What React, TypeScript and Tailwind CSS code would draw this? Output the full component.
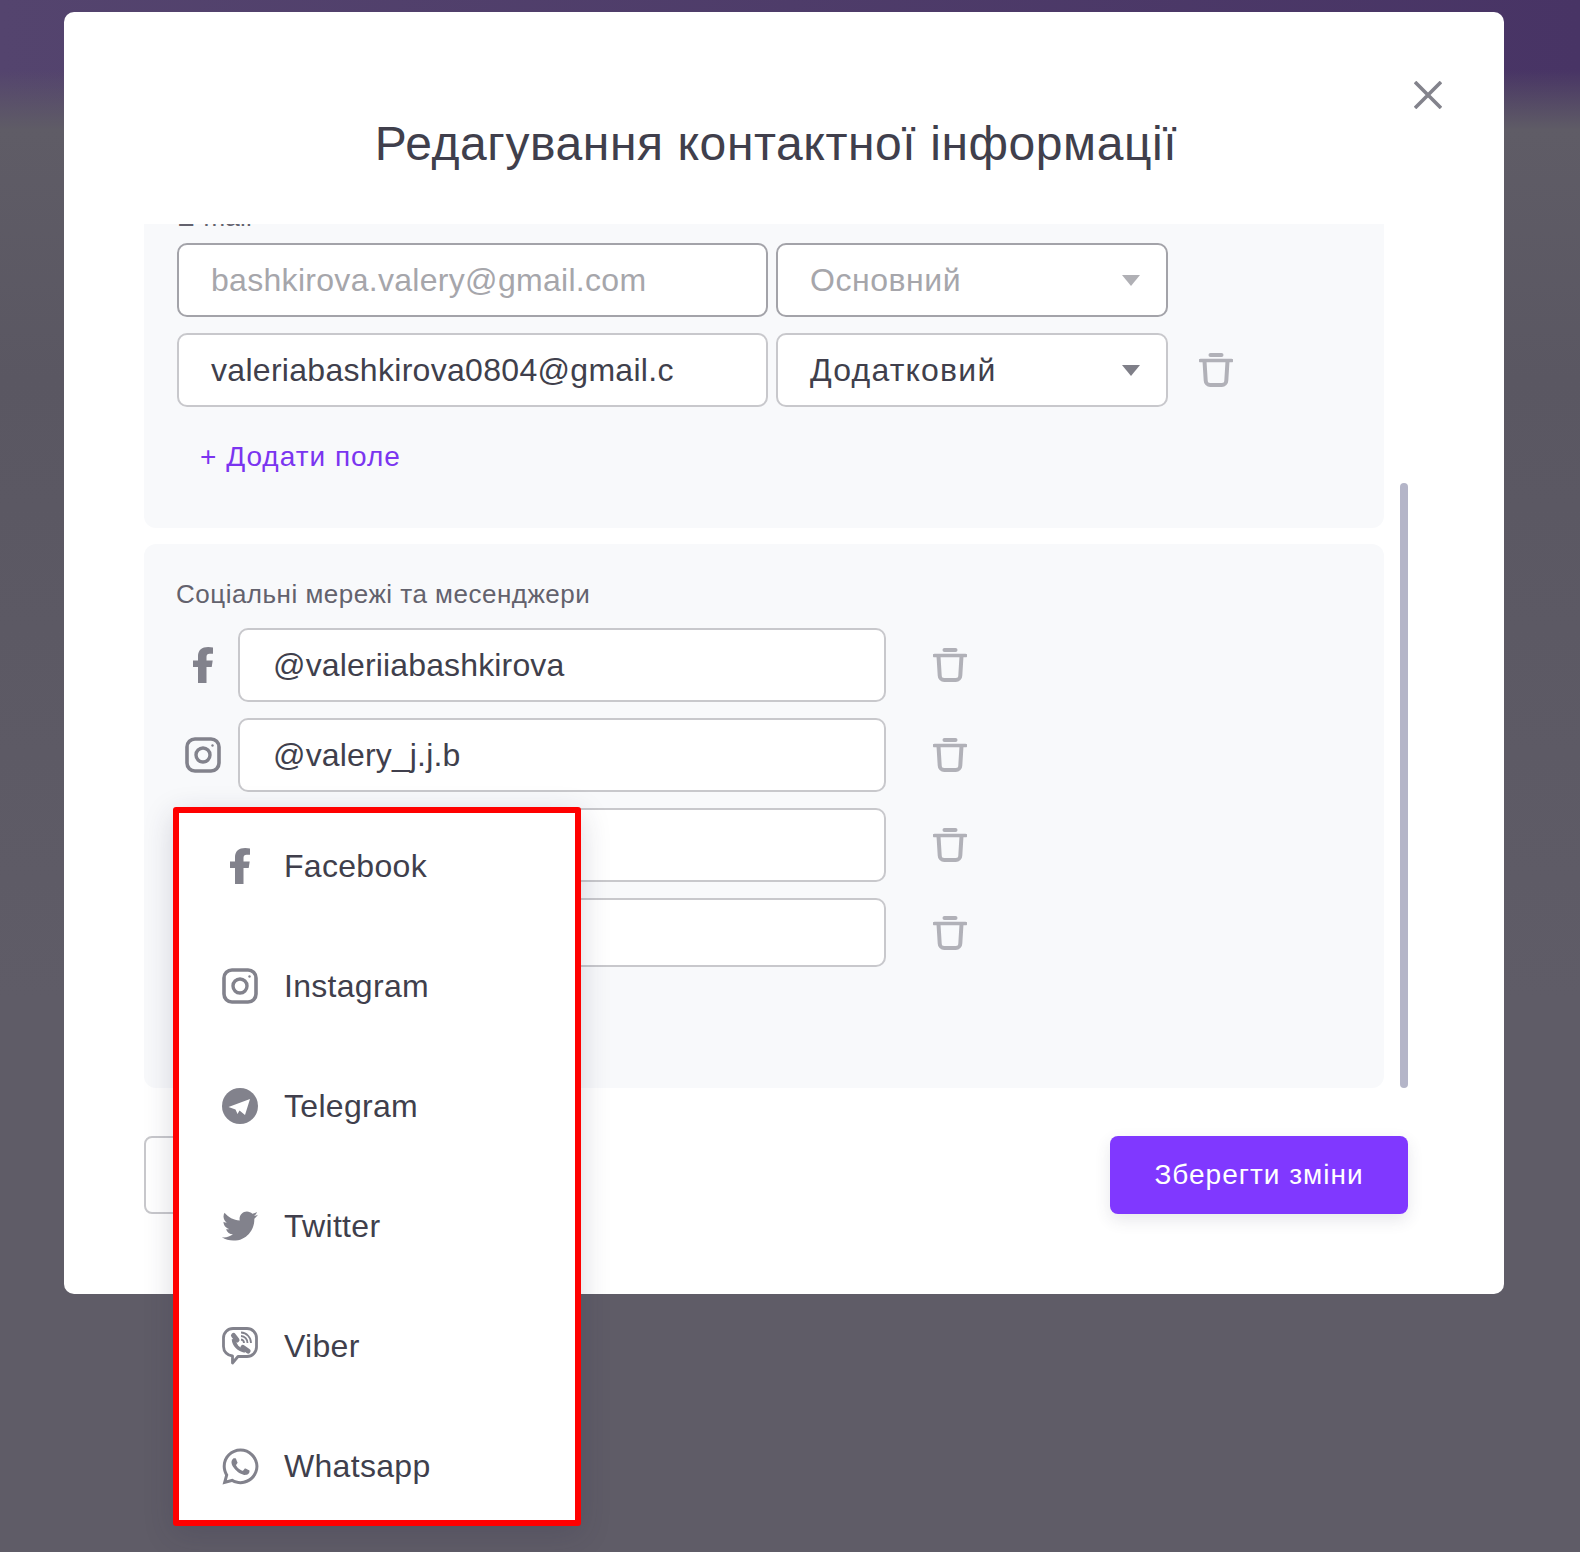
import React from 'react';
import { FaTwitter, FaWhatsapp } from 'react-icons/fa';

const font = { fontFamily: '"Liberation Sans", Arial, sans-serif' };

const FacebookIcon = () => (
  <svg viewBox="0 0 20 36" className="w-5 h-9">
    <path
      d="M13.500 36V20h5.200l1-6.500h-6.200V9.800c0-2 1-3.100 3-3.100H20V.5C18.600.2 17 0 15.200 0 9 0 5 3.200 5 9v4.500H0V20h5v16z"
      fill="currentColor"
    />
  </svg>
);

const InstagramIcon = () => (
  <svg viewBox="0 0 36 36" className="w-9 h-9" fill="none" stroke="currentColor">
    <rect x="2" y="2" width="32" height="32" rx="8" strokeWidth="3.600" />
    <circle cx="18" cy="18" r="7" strokeWidth="3.400" />
    <circle cx="27.500" cy="8.500" r="1.200" fill="currentColor" stroke="none" />
  </svg>
);

const TelegramIcon = () => (
  <svg viewBox="0 0 36 36" className="w-9 h-9">
    <circle cx="18" cy="18" r="18" fill="currentColor" />
    <path d="M6.500 19L28 11l-5 16-5.500-4.500-2 3.500-2-4.500z" fill="#fff" />
  </svg>
);

const ViberIcon = () => (
  <svg viewBox="0 0 36 38" className="w-9 h-[38px]" fill="none" stroke="currentColor">
    <path
      d="M11 1.500h14a9.500 9.500 0 0 1 9.500 9.500v9a9.500 9.500 0 0 1-9.500 9.500h-9l-5.500 6.500v-7a9.500 9.500 0 0 1-9-9.500V11A9.500 9.500 0 0 1 11 1.500z"
      strokeWidth="2.800"
      strokeLinejoin="round"
    />
    <path d="M11.500 12c.5 6 5 11 11.500 12" strokeWidth="3.600" />
    <path d="M11.500 8.500l3.500 4.500M21 20.500l5 3.500" strokeWidth="5" strokeLinecap="round" />
    <path d="M19 5.500a10.500 10.500 0 0 1 10 10.500M19 9a7 7 0 0 1 6.500 7M19 12.500a3.500 3.500 0 0 1 3 3.500" strokeWidth="1.800" />
  </svg>
);

const TrashIcon = () => (
  <svg viewBox="0 0 34 34" className="w-[34px] h-[34px] shrink-0 text-[#b1b1b8]" fill="none" stroke="currentColor">
    <path d="M11.500 2h11" strokeWidth="4" strokeLinecap="round" />
    <path d="M1.500 7.500h31" strokeWidth="3.600" strokeLinecap="round" />
    <path d="M5.500 8l1.200 19.500a4.500 4.500 0 0 0 4.500 4.500h11.600a4.500 4.500 0 0 0 4.500-4.500L28.500 8" strokeWidth="4" />
  </svg>
);

const Caret = ({ dim }: { dim?: boolean }) => (
  <svg viewBox="0 0 18 11" className={`w-[18px] h-[11px] ${dim ? 'text-[#b0b0b5]' : 'text-[#7f7f88]'}`}>
    <path d="M0 0h18L9 11z" fill="currentColor" />
  </svg>
);

const socialRows = [
  { icon: <FacebookIcon />, value: '@valeriiabashkirova', height: 'h-[74px]' },
  { icon: <InstagramIcon />, value: '@valery_j.j.b', height: 'h-[74px]' },
  { icon: null, value: '', height: 'h-[74px]' },
  { icon: null, value: '', height: 'h-[69px]' },
];

const menuItems = [
  { label: 'Facebook', icon: <FacebookIcon /> },
  { label: 'Instagram', icon: <InstagramIcon /> },
  { label: 'Telegram', icon: <TelegramIcon /> },
  { label: 'Twitter', icon: <FaTwitter className="w-9 h-9 shrink-0" /> },
  { label: 'Viber', icon: <ViberIcon /> },
  { label: 'Whatsapp', icon: <FaWhatsapp className="w-[41px] h-[41px] shrink-0" /> },
];

export default function App() {
  return (
    <div
      style={font}
      className="relative h-[1552px] w-full overflow-hidden pt-3 pl-16 bg-[linear-gradient(180deg,transparent_70px,#5f5c66_130px,#5a5762_380px,#5f5c67_1000px),linear-gradient(90deg,#54446e,#483465)]"
    >
      <div className="relative w-[1440px] h-[1282px] rounded-[10px] bg-white pl-20 pr-24">
        <button className="absolute left-[1350px] top-[69px] text-[#83838c]">
          <svg viewBox="0 0 28 28" className="w-7 h-7" stroke="currentColor" strokeWidth="3.600" fill="none">
            <path d="M1 1l26 26M27 1L1 27" />
          </svg>
        </button>

        <div className="h-[212px] pt-[92px]">
          <h1 className="h-20 leading-[80px] text-center text-[48px] font-normal tracking-[0.58px] text-[#403f4c]">
            Редагування контактної інформації
          </h1>
        </div>

        <div className="relative h-[864px] overflow-hidden">
          <div className="-mt-[53px] w-[1240px]">
            <div className="h-[357px] rounded-[12px] bg-[#f8f9fb] pt-[31px] pl-[33px]">
              <div className="h-[30px] leading-[30px] text-[26px] tracking-[0.2px] text-[#63626d]">E-mail</div>
              <div className="mt-[11px] flex gap-2">
                <div className="w-[591px] h-[74px] rounded-[10px] border-2 border-[#a3a3a9] bg-white pl-8 leading-[70px] text-[32px] tracking-[0.3px] text-[#a6a6ab]">
                  bashkirova.valery@gmail.com
                </div>
                <div className="w-[392px] h-[74px] rounded-[10px] border-2 border-[#a3a3a9] bg-white pl-[32px] pr-[26px] flex items-center justify-between text-[32px] tracking-[0.55px] text-[#a6a6ab]">
                  Основний
                  <Caret dim />
                </div>
              </div>
              <div className="mt-4 flex items-center gap-2">
                <div className="w-[591px] h-[74px] rounded-[10px] border-2 border-[#c8c8cc] bg-white pl-8 leading-[70px] text-[32px] tracking-[0.3px] text-[#403f4c] overflow-hidden whitespace-nowrap">
                  valeriabashkirova0804@gmail.c
                </div>
                <div className="w-[392px] h-[74px] rounded-[10px] border-2 border-[#c8c8cc] bg-white pl-[32px] pr-[26px] flex items-center justify-between text-[32px] tracking-[1.2px] text-[#403f4c]">
                  Додатковий
                  <Caret />
                </div>
                <div className="ml-[23px]">
                  <TrashIcon />
                </div>
              </div>
              <div className="mt-[32px] pl-[23px] h-9 leading-9 text-[28px] tracking-[1px] text-[#7b35f0]">
                + Додати поле
              </div>
            </div>

            <div className="mt-4 h-[544px] rounded-[12px] bg-[#f8f9fb] pt-[35px] pl-[33px]">
              <div className="h-[30px] leading-[30px] text-[26px] tracking-[0.5px] text-[#63626d] -ml-px">
                Соціальні мережі та месенджери
              </div>
              <div className="mt-[19px] flex flex-col gap-4">
                {socialRows.map((row, index) => (
                  <div key={index} className="flex items-center">
                    <div className="w-[52px] flex justify-center text-[#82828c]">{row.icon}</div>
                    <div className={`ml-[9px] w-[648px] ${row.height} rounded-[10px] border-2 border-[#c8c8cc] bg-white pl-[33px] flex items-center text-[32px] tracking-[0.15px] text-[#403f4c]`}>
                      {row.value}
                    </div>
                    <div className="ml-[47px]">
                      <TrashIcon />
                    </div>
                  </div>
                ))}
              </div>
            </div>
          </div>
          <div className="absolute right-0 top-[259px] w-2 h-[605px] rounded-full bg-[#b4b5c8]" />
        </div>

        <div className="mt-12 flex justify-between">
          <div className="w-[300px] h-[78px] rounded-lg border-2 border-[#c8c8cc] bg-white" />
          <button className="w-[298px] h-[78px] rounded-lg bg-[#8038ff] text-white text-[28px] tracking-[1px] shadow-[0_6px_16px_rgba(60,60,90,0.12)]">
            Зберегти зміни
          </button>
        </div>
      </div>

      <div className="absolute left-[173px] top-[807px] w-[408px] h-[719px] rounded-[3px] border-[6px] border-[#ff0000] bg-white pt-4 pl-[43px] flex flex-col gap-[46px] shadow-[0_8px_30px_rgba(40,40,70,0.18)]">
        {menuItems.map(item => (
          <div key={item.label} className="h-[74px] flex items-center gap-[26px]">
            <div className="w-9 h-[41px] flex items-center justify-center text-[#82828c]">{item.icon}</div>
            <span className="text-[32px] tracking-[0.3px] text-[#403f4c]">{item.label}</span>
          </div>
        ))}
      </div>
    </div>
  );
}
